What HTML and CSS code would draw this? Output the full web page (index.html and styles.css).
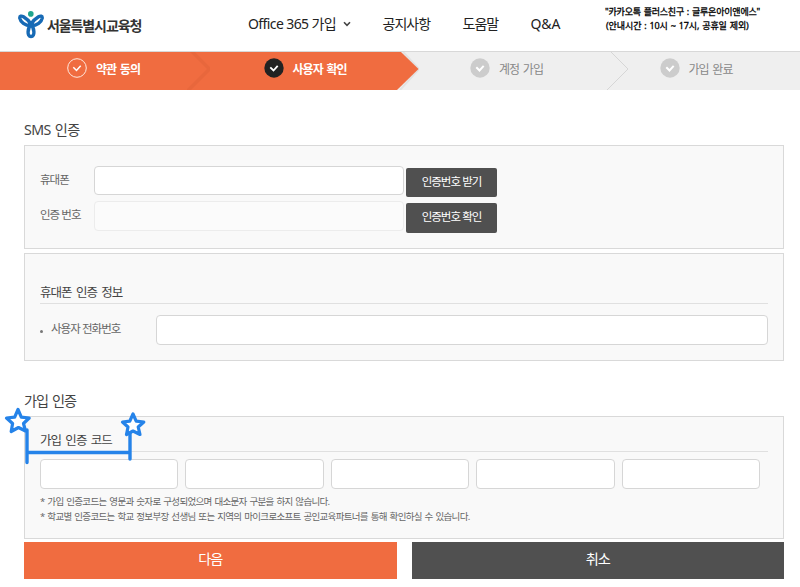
FILE: index.html
```html
<!DOCTYPE html>
<html lang="ko">
<head>
  <meta charset="UTF-8">
  <meta name="viewport" content="width=device-width, initial-scale=1.0">
  <title>사용자 확인</title>
  <link rel="stylesheet" href="styles.css">
</head>
<body>
  <header class="header">
    <div class="logo">
      <svg class="logo-mark" width="26" height="28" viewBox="0 0 26 28" fill="none">
        <path d="M12.500 14.500C7 14.500 2.500 11 1.800 7.200C1.500 5 3.500 4.600 5.500 5.800C8.500 7.600 11 10 13 13C15 10 17.500 7.600 20.500 5.800C22.500 4.600 24.500 5 24.200 7.200C23.500 11 19 14.500 13.500 14.500" stroke="#176ab5" stroke-width="3.400" stroke-linejoin="round"/>
        <path d="M13 13.500C9.500 17 8.700 25.500 13 25.500C17.300 25.500 16.500 17 13 13.500Z" stroke="#176ab5" stroke-width="3.400" stroke-linejoin="round"/>
        <circle cx="12.800" cy="2.900" r="2.800" fill="#20a58e"/>
      </svg>
      <span class="logo-text">서울특별시교육청</span>
    </div>
    <nav class="nav">
      <a class="nav-office">Office 365 가입
        <svg width="8" height="6" viewBox="0 0 8 6" fill="none"><path d="M1 1.200L4 4.300L7 1.200" stroke="#444" stroke-width="1.600"/></svg>
      </a>
      <a class="nav-notice">공지사항</a>
      <a class="nav-help">도움말</a>
      <a class="nav-qna">Q&amp;A</a>
    </nav>
    <div class="contact">
      <p>"카카오톡 플러스친구 : 글루온아이앤에스"</p>
      <p class="hours">(안내시간 : 10시 ~ 17시, 공휴일 제외)</p>
    </div>
  </header>

  <div class="steps">
    <div class="step step-done">
      <svg class="check" width="20" height="20" viewBox="0 0 20 20" fill="none"><circle cx="10" cy="10" r="9.300" stroke="#ffe9df"/><path d="M6.300 9.300L9.500 12.500L13.700 7.800" stroke="#fff" stroke-width="1.500"/></svg>
      <span>약관 동의</span>
      <svg class="arrow" width="23" height="38" viewBox="0 0 23 38"><path d="M3 0L20 17L-1 38H4L23 19V15L8 0Z" fill="#e8673c"/></svg>
    </div>
    <div class="step step-active">
      <svg class="check" width="20" height="20" viewBox="0 0 20 20" fill="none"><circle cx="10" cy="10" r="9.700" fill="#222"/><path d="M6.300 9.300L9.500 12.500L13.700 7.800" stroke="#fff" stroke-width="1.800"/></svg>
      <span>사용자 확인</span>
      <svg class="arrow" width="23" height="38" viewBox="0 0 23 38"><path d="M0 0H23V38H0Z" fill="#efefef"/><path d="M7 0L23 17L4 38" fill="none" stroke="#e2e2e2" stroke-width="2"/><path d="M-1 0H5L22.500 17L1 38H-1Z" fill="#f06c40"/></svg>
    </div>
    <div class="step step-account">
      <svg class="check" width="20" height="20" viewBox="0 0 20 20" fill="none"><circle cx="10" cy="10" r="9.700" fill="#ccc"/><path d="M6.300 9.300L9.500 12.500L13.700 7.800" stroke="#fff" stroke-width="2"/></svg>
      <span>계정 가입</span>
      <svg class="arrow" width="23" height="38" viewBox="0 0 23 38" fill="none"><path d="M5 0L22 17L1 38" stroke="#d6d6d6"/></svg>
    </div>
    <div class="step step-finish">
      <svg class="check" width="20" height="20" viewBox="0 0 20 20" fill="none"><circle cx="10" cy="10" r="9.700" fill="#ccc"/><path d="M6.300 9.300L9.500 12.500L13.700 7.800" stroke="#fff" stroke-width="2"/></svg>
      <span>가입 완료</span>
    </div>
  </div>

  <main class="content">
    <h2 class="title title-sms">SMS 인증</h2>
    <section class="box sms-box">
      <div class="sms-row">
        <label for="phone">휴대폰</label>
        <input type="text" id="phone">
        <button class="btn-code">인증번호 받기</button>
      </div>
      <div class="sms-row">
        <label for="code">인증 번호</label>
        <input type="text" id="code" disabled>
        <button class="btn-code">인증번호 확인</button>
      </div>
    </section>

    <section class="box info-box">
      <h3>휴대폰 인증 정보</h3>
      <div class="info-row">
        <label for="userPhone">사용자 전화번호</label>
        <input type="text" id="userPhone">
      </div>
    </section>

    <h2 class="title title-join">가입 인증</h2>
    <section class="box join-box">
      <h3>가입 인증 코드</h3>
      <div class="code-row">
        <input type="text">
        <input type="text">
        <input type="text">
        <input type="text">
        <input type="text">
      </div>
      <p class="note note-first">* 가입 인증코드는 영문과 숫자로 구성되었으며 대소문자 구분을 하지 않습니다.</p>
      <p class="note">* 학교별 인증코드는 학교 정보부장 선생님 또는 지역의 마이크로소프트 공인교육파트너를 통해 확인하실 수 있습니다.</p>
      <svg class="marker" width="148" height="62" viewBox="0 0 148 62" fill="none" stroke="#2583e9">
        <path d="M23 25V57.500M126 28V54M23 47.500H126" stroke-width="3.400" stroke-linecap="round"/>
        <path d="M14 4.500L17.300 12.200L25.200 13L19.500 18.500L21.500 26L14.500 22.500L7.200 26.500L8.600 18.500L2.500 13L10.700 12.200Z" fill="#fff" stroke-width="3.200" stroke-linejoin="round"/>
        <path d="M129 9L132.200 16.200L139.800 17L134.200 22L136 29.500L129 26L122.500 29.500L124 22L118.500 17L125.800 16.200Z" fill="#fff" stroke-width="3.200" stroke-linejoin="round"/>
      </svg>
    </section>

    <div class="actions">
      <button class="btn-next">다음</button>
      <button class="btn-cancel">취소</button>
    </div>
  </main>
</body>
</html>
```
FILE: styles.css
```css
* {
  box-sizing: border-box;
}
body {
  margin: 0;
  font-family: "Noto Sans", "Noto Sans CJK KR", sans-serif;
  letter-spacing: -0.96px;
  color: #444;
  background: #fff;
  white-space: nowrap;
}
h2, h3, p {
  margin: 0;
  font-weight: normal;
}
button {
  border: none;
  padding: 0;
  color: #fff;
  font-family: inherit;
  letter-spacing: inherit;
}
input {
  height: 29.500px;
  min-width: 0;
  padding: 0 8px;
  border: 1px solid #d6d6d6;
  border-radius: 4px;
  background: #fff;
}
input:disabled {
  border-color: #ececec;
  background: #fbfbfb;
}

.header {
  display: flex;
  height: 51px;
}
.logo {
  display: flex;
  width: 248px;
  padding: 11px 0 0 18px;
}
.logo-text {
  margin: 4px 0 0 3px;
  font-size: 14px;
  font-weight: bold;
  line-height: 22px;
  letter-spacing: -1.1px;
  color: #333;
}
.nav {
  display: flex;
  width: 357px;
  padding-top: 14px;
  font-size: 14px;
  line-height: 20px;
  color: #222;
}
.nav-office {
  width: 134.500px;
  letter-spacing: -0.6px;
}
.nav-office svg {
  margin: 0 0 2px 4px;
}
.nav-notice {
  width: 80px;
}
.nav-help {
  width: 68px;
}
.nav-qna {
  letter-spacing: -0.1px;
}
.contact {
  padding-top: 5px;
  font-size: 9px;
  font-weight: bold;
  line-height: 14px;
  letter-spacing: -0.2px;
  word-spacing: 0.7px;
  color: #000;
  -webkit-text-stroke: 0.3px #000;
}
.hours {
  padding-left: 1px;
  letter-spacing: -0.1px;
}

.steps {
  display: grid;
  grid-template-columns: 209.500px 209.500px 209.500px 1fr;
  height: 39px;
  border-top: 1px solid #d8d8d8;
  background: #efefef;
  font-size: 12px;
  word-spacing: 1.500px;
  color: #888;
}
.step {
  display: flex;
}
.check {
  flex: none;
  margin: 6px 9px 0 0;
}
.step span {
  line-height: 35px;
}
.arrow {
  margin-left: auto;
}
.step-done, .step-active {
  background: #f06c40;
  font-weight: bold;
  color: #fff;
}
.step-done {
  padding-left: 67px;
}
.step-active {
  padding-left: 54px;
}
.step-account {
  padding-left: 51px;
}
.step-finish {
  padding-left: 31px;
}

.content {
  padding: 30px 16px 0 24px;
}
.title {
  height: 25px;
  font-size: 14.200px;
  line-height: 19px;
  word-spacing: 1px;
}
.title-sms {
  letter-spacing: -0.6px;
}
.box {
  border: 1px solid #d9d9d9;
  background: #f9f9f9;
  padding: 0 15px;
}
.sms-box {
  height: 104px;
  padding-top: 19.500px;
}
.sms-row {
  display: flex;
  height: 35.500px;
  font-size: 11.500px;
  color: #666;
}
.sms-row label {
  width: 54px;
  line-height: 28px;
}
.sms-row input {
  width: 310px;
}
.btn-code {
  width: 91px;
  height: 29.500px;
  margin: 2px 0 0 2px;
  padding-bottom: 3px;
  border-radius: 2px;
  background: #505050;
  font-size: 11.500px;
}
.info-box {
  height: 108px;
  margin-top: 4px;
  padding-top: 29px;
}
.box h3 {
  height: 21px;
  border-bottom: 1px solid #e0e0e0;
  font-size: 12.500px;
  line-height: 20px;
  word-spacing: 2px;
}
.info-row {
  display: flex;
  padding-top: 11px;
}
.info-row label {
  width: 116px;
  font-size: 11.500px;
  line-height: 28px;
  color: #666;
}
.info-row label::before {
  content: "";
  display: inline-block;
  width: 3px;
  height: 3px;
  margin-right: 8px;
  border-radius: 50%;
  background: #777;
}
.info-row input {
  flex: 1;
}
.title-join {
  margin-top: 30px;
}
.join-box {
  position: relative;
  height: 123px;
  padding-top: 14px;
}
.code-row {
  display: grid;
  grid-template-columns: repeat(5, 1fr);
  gap: 7px;
  padding: 7px 8px 0 0;
}
.note {
  font-size: 9.500px;
  line-height: 15px;
  letter-spacing: -0.68px;
  word-spacing: 1px;
  color: #666;
}
.note-first {
  margin-top: 5px;
}
.marker {
  position: absolute;
  left: -21px;
  top: -12px;
}
.actions {
  display: grid;
  grid-template-columns: 1fr 1fr;
  gap: 15px;
  margin-top: 3px;
}
.actions button {
  height: 37px;
  padding-bottom: 5px;
  font-size: 14.200px;
}
.btn-next {
  background: #f06c40;
}
.btn-cancel {
  background: #505050;
}
```
